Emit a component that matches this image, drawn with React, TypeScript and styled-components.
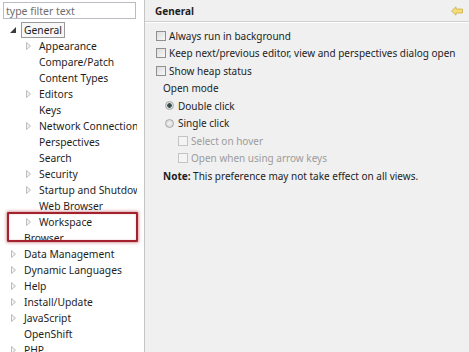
import React from "react";
import styled, { createGlobalStyle } from "styled-components";

type Expander = "open" | "closed" | "none";

interface TreeItem {
  label: string;
  level: number;
  expander: Expander;
  selected?: boolean;
}

const treeItems: TreeItem[] = [
  { label: "General", level: 0, expander: "open", selected: true },
  { label: "Appearance", level: 1, expander: "closed" },
  { label: "Compare/Patch", level: 1, expander: "none" },
  { label: "Content Types", level: 1, expander: "none" },
  { label: "Editors", level: 1, expander: "closed" },
  { label: "Keys", level: 1, expander: "none" },
  { label: "Network Connections", level: 1, expander: "closed" },
  { label: "Perspectives", level: 1, expander: "none" },
  { label: "Search", level: 1, expander: "none" },
  { label: "Security", level: 1, expander: "closed" },
  { label: "Startup and Shutdown", level: 1, expander: "closed" },
  { label: "Web Browser", level: 1, expander: "none" },
  { label: "Workspace", level: 1, expander: "closed" },
  { label: "Browser", level: 0, expander: "none" },
  { label: "Data Management", level: 0, expander: "closed" },
  { label: "Dynamic Languages", level: 0, expander: "closed" },
  { label: "Help", level: 0, expander: "closed" },
  { label: "Install/Update", level: 0, expander: "closed" },
  { label: "JavaScript", level: 0, expander: "closed" },
  { label: "OpenShift", level: 0, expander: "none" },
  { label: "PHP", level: 0, expander: "closed" },
];

function App() {
  return (
    <>
      <GlobalStyle />
      <Window>
        <Sidebar>
          <FilterInput placeholder="type filter text" />
          <Tree>
            {treeItems.map((item) => (
              <TreeRow key={item.label} $level={item.level}>
                <ExpanderBox>
                  {item.expander === "open" && (
                    <svg width="6" height="6" viewBox="0 0 6 6">
                      <path d="M6 0 L6 6 L0 6 Z" fill="#3c3c3c" />
                    </svg>
                  )}
                  {item.expander === "closed" && (
                    <svg width="5" height="8" viewBox="0 0 5 8">
                      <path d="M0.5 0.5 L4.5 4 L0.5 7.5 Z" fill="#f2f2f2" stroke="#bdbdbd" />
                    </svg>
                  )}
                </ExpanderBox>
                <TreeLabel $selected={item.selected}>{item.label}</TreeLabel>
              </TreeRow>
            ))}
          </Tree>
          <Highlight />
        </Sidebar>
        <Main>
          <Header>
            <HeaderTitle>General</HeaderTitle>
            <svg width="12" height="10" viewBox="0 0 12 10">
              <path
                d="M0.5 5 L5 0.8 L5 3 L11.5 3 L11.5 7 L5 7 L5 9.2 Z"
                fill="#f3dc7a"
                stroke="#cdb04a"
                strokeWidth="0.8"
              />
            </svg>
          </Header>
          <Body>
            <OptionRow>
              <CheckBox />
              Always run in background
            </OptionRow>
            <OptionRow>
              <CheckBox />
              Keep next/previous editor, view and perspectives dialog open
            </OptionRow>
            <OptionRow>
              <CheckBox />
              Show heap status
            </OptionRow>
            <GroupLabel>Open mode</GroupLabel>
            <OptionRow $indent={9}>
              <Radio $checked />
              Double click
            </OptionRow>
            <OptionRow $indent={9}>
              <Radio />
              Single click
            </OptionRow>
            <OptionRow $indent={22} $disabled>
              <CheckBox $disabled />
              Select on hover
            </OptionRow>
            <OptionRow $indent={22} $disabled>
              <CheckBox $disabled />
              Open when using arrow keys
            </OptionRow>
            <GroupLabel>
              <b>Note:</b> This preference may not take effect on all views.
            </GroupLabel>
          </Body>
        </Main>
      </Window>
    </>
  );
}

const GlobalStyle = createGlobalStyle`
  body {
    margin: 0;
    overflow: hidden;
    font-family: "Noto Sans", "Liberation Sans", sans-serif;
    font-size: 10px;
    color: #1e1e1e;
  }
`;

const Window = styled.div`
  display: flex;
  width: 469px;
  height: 352px;
  overflow: hidden;
`;

const Sidebar = styled.div`
  position: relative;
  width: 144px;
  flex-shrink: 0;
  background: #ffffff;
  border-right: 1px solid #c4c4c4;
  overflow: hidden;
`;

const FilterInput = styled.input`
  display: block;
  box-sizing: border-box;
  width: 133px;
  height: 17px;
  margin: 2px 0 0 3px;
  padding: 0 2px;
  border: 1px solid #b9bcc2;
  font-family: inherit;
  font-size: 10.5px;
  outline: none;

  &::placeholder {
    color: #6d6d6d;
  }
`;

const Tree = styled.div`
  display: flex;
  flex-direction: column;
  width: 137px;
  padding-top: 3px;
  overflow: hidden;
`;

const TreeRow = styled.div<{ $level: number }>`
  display: flex;
  align-items: center;
  height: 16px;
  padding-left: ${(p) => 9 + p.$level * 15}px;
  white-space: nowrap;
  font-size: 10.3px;
`;

const ExpanderBox = styled.span`
  display: flex;
  align-items: center;
  justify-content: center;
  width: 8px;
  margin-right: 4px;
  flex-shrink: 0;
`;

const TreeLabel = styled.span<{ $selected?: boolean }>`
  padding: 0 2px;
  line-height: 14px;
  border: 1px solid ${(p) => (p.$selected ? "#9a9a9a" : "transparent")};
  background: ${(p) => (p.$selected ? "#f7f7f7" : "transparent")};
`;

const Highlight = styled.div`
  position: absolute;
  top: 212px;
  left: 7px;
  width: 127px;
  height: 26px;
  border: 2px solid #a2222e;
  border-radius: 1px;
  box-shadow: 0 0 3px 1px rgba(170, 40, 50, 0.45), inset 0 0 2px rgba(170, 40, 50, 0.3);
`;

const Main = styled.div`
  flex: 1;
  background: #f0f0f0;
  display: flex;
  flex-direction: column;
`;

const Header = styled.div`
  display: flex;
  align-items: center;
  justify-content: space-between;
  height: 21px;
  padding: 0 6px 0 10px;
  border-bottom: 1px solid #cfcfcf;
  box-shadow: 0 1px 0 #ffffff;
`;

const HeaderTitle = styled.span`
  font-weight: bold;
`;

const Body = styled.div`
  display: flex;
  flex-direction: column;
  padding: 5px 0 0 11px;
`;

const OptionRow = styled.div<{ $indent?: number; $disabled?: boolean }>`
  display: flex;
  align-items: center;
  gap: 3px;
  height: 17.5px;
  padding-left: ${(p) => p.$indent ?? 0}px;
  white-space: nowrap;
  color: ${(p) => (p.$disabled ? "#9c9c9c" : "#1e1e1e")};
`;

const GroupLabel = styled.div`
  display: flex;
  align-items: center;
  height: 17.5px;
  padding-left: 7px;
  white-space: pre;

  b {
    font-weight: bold;
  }
`;

const CheckBox = styled.span<{ $disabled?: boolean }>`
  box-sizing: border-box;
  width: 10px;
  height: 10px;
  border: 1px solid ${(p) => (p.$disabled ? "#c4c4c4" : "#8f8f8f")};
  background: ${(p) =>
    p.$disabled ? "#f4f4f4" : "linear-gradient(135deg, #dcdcdc, #f8f8f8)"};
  flex-shrink: 0;
`;

const Radio = styled.span<{ $checked?: boolean }>`
  box-sizing: border-box;
  width: 9px;
  height: 9px;
  border-radius: 50%;
  border: 1px solid #a8a8a8;
  background: ${(p) =>
    p.$checked
      ? "radial-gradient(circle, #3a4a4a 0 2px, #d8dede 2.5px)"
      : "radial-gradient(circle, #f4f4f4, #d0d0d0)"};
  flex-shrink: 0;
  margin-right: 1px;
`;

export default App;
